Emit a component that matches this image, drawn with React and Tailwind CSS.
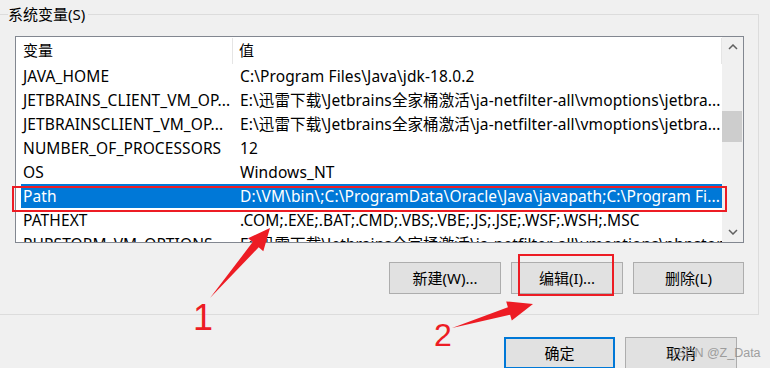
import React from "react";

const rows = [
  ["JAVA_HOME", "C:\\Program Files\\Java\\jdk-18.0.2"],
  ["JETBRAINS_CLIENT_VM_OP...", "E:\\迅雷下载\\Jetbrains全家桶激活\\ja-netfilter-all\\vmoptions\\jetbra..."],
  ["JETBRAINSCLIENT_VM_OP...", "E:\\迅雷下载\\Jetbrains全家桶激活\\ja-netfilter-all\\vmoptions\\jetbra..."],
  ["NUMBER_OF_PROCESSORS", "12"],
  ["OS", "Windows_NT"],
  ["Path", "D:\\VM\\bin\\;C:\\ProgramData\\Oracle\\Java\\javapath;C:\\Program Fi...", true],
  ["PATHEXT", ".COM;.EXE;.BAT;.CMD;.VBS;.VBE;.JS;.JSE;.WSF;.WSH;.MSC"],
  ["PHPSTORM_VM_OPTIONS", "E:\\迅雷下载\\Jetbrains全家桶激活\\ja-netfilter-all\\vmoptions\\phpstorm..."],
];

function Btn({ children, primary, className = "" }) {
  return (
    <div
      className={
        "flex h-[32px] items-center justify-center bg-[#e1e1e1] text-[15px] text-black " +
        (primary ? "border-2 border-[#0078d7] " : "border border-[#adadad] ") +
        className
      }
    >
      {children}
    </div>
  );
}

export default function App() {
  return (
    <div
      className="relative h-[368px] w-[770px] overflow-hidden bg-[#f0f0f0] text-black"
      style={{ fontFamily: '"Noto Sans", "Noto Sans CJK SC", sans-serif' }}
    >
      {/* group box */}
      <div className="relative mt-[14px] h-[301px] w-[759px] border-t border-r border-b border-[#dcdcdc]">
        <span className="absolute left-[8px] top-[-10px] bg-[#f0f0f0] pr-[3px] text-[15px] leading-[18px]">
          系统变量(S)
        </span>

        {/* list view */}
        <div className="ml-[15px] mt-[21px] flex h-[207px] w-[729px] border border-[#828790] bg-white">
          <div className="flex w-[706px] flex-col overflow-hidden">
            {/* header */}
            <div className="flex h-[27px] shrink-0 items-center text-[15px]">
              <div className="ml-[5px] flex h-[26px] w-[212px] items-center border-r border-[#e5e5e5] pl-[2px]">
                变量
              </div>
              <div className="flex h-[26px] flex-1 items-center border-r border-[#e5e5e5] pl-[6px]">值</div>
            </div>
            {rows.map(([name, value, sel]) => (
              <div
                key={name}
                className={
                  "ml-[5px] flex h-[24px] shrink-0 items-center whitespace-nowrap pt-[2px] text-[15.5px] tracking-[0.1px] " +
                  (sel ? "bg-[#0078d7] text-white" : "")
                }
              >
                <div className="w-[212px] overflow-hidden pl-[2px]">{name}</div>
                <div className="flex-1 overflow-hidden pl-[7px]">{value}</div>
              </div>
            ))}
          </div>
          {/* scrollbar */}
          <div className="flex w-[21px] flex-col bg-[#f0f0f0]">
            <div className="flex h-[20px] items-center justify-center">
              <svg width="10" height="6" viewBox="0 0 10 6">
                <path d="M1 5 L5 1 L9 5" fill="none" stroke="#606060" strokeWidth="1.5" />
              </svg>
            </div>
            <div className="flex-1">
              <div className="mt-[54px] h-[31px] w-[20px] bg-[#cdcdcd]" />
            </div>
            <div className="flex h-[20px] items-center justify-center">
              <svg width="10" height="6" viewBox="0 0 10 6">
                <path d="M1 1 L5 5 L9 1" fill="none" stroke="#606060" strokeWidth="1.5" />
              </svg>
            </div>
          </div>
        </div>

        {/* buttons */}
        <div className="mt-[19px] flex justify-end gap-[10px] pr-[14px]">
          <Btn className="w-[112px]">新建(W)...</Btn>
          <Btn className="w-[112px]">编辑(I)...</Btn>
          <Btn className="w-[111px]">删除(L)</Btn>
        </div>
      </div>

      {/* dialog buttons */}
      <div className="mt-[22px] flex justify-end gap-[10px] pr-[33px]">
        <Btn primary className="w-[111px]">确定</Btn>
        <Btn className="w-[112px]">取消</Btn>
      </div>

      {/* annotations */}
      <svg className="pointer-events-none absolute left-0 top-0" width="770" height="368" viewBox="0 0 770 368">
        <rect x="13" y="187" width="713" height="24" fill="none" stroke="#ed1c24" strokeWidth="2" />
        <rect x="519" y="255" width="94" height="40" fill="none" stroke="#ed1c24" strokeWidth="2" />
        <polygon
          points="210,298 252.7,242.1 248,238.2 270,228 263.3,251.2 258.7,247.3"
          fill="#ed1c24"
        />
        <polygon
          points="452,328 507.9,307.2 506.2,301.4 533,304 511.8,320.6 510.1,314.8"
          fill="#ed1c24"
        />
      </svg>
      <span
        className="absolute left-[193px] top-[298px] text-[36px] leading-[40px] text-[#ed1c24]"
        style={{ fontFamily: '"Liberation Sans", sans-serif' }}
      >
        1
      </span>
      <span
        className="absolute left-[434px] top-[317px] text-[32px] leading-[36px] text-[#ed1c24]"
        style={{ fontFamily: '"Liberation Sans", sans-serif' }}
      >
        2
      </span>
      <span
        className="absolute left-[668px] top-[345px] text-[12.5px] leading-[16px] text-[#8c8c8c] opacity-80"
        style={{ fontFamily: '"Liberation Sans", sans-serif' }}
      >
        CSDN @Z_Data
      </span>
    </div>
  );
}
